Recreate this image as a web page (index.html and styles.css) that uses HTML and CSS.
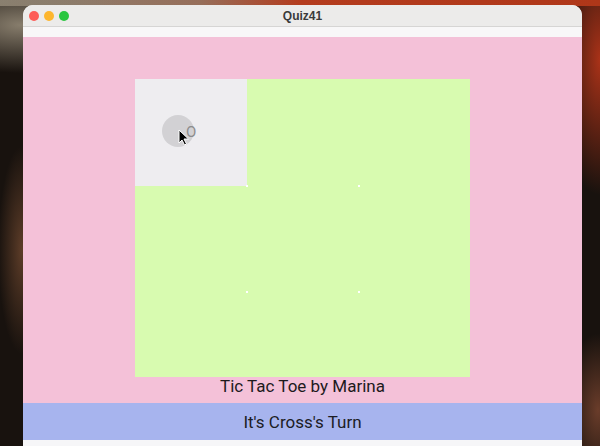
FILE: index.html
```html
<!DOCTYPE html>
<html>
<head>
<meta charset="utf-8">
<title>Quiz41</title>
<link rel="stylesheet" href="styles.css">
</head>
<body>
<div class="desktop">
  <div class="window">
    <div class="titlebar">
      <div class="lights">
        <span class="light red"></span>
        <span class="light yellow"></span>
        <span class="light green"></span>
      </div>
      <div class="title">Quiz41</div>
    </div>
    <div class="toolbar"></div>
    <div class="board-area">
      <div class="board">
        <div class="cell hovered">
          <span class="ripple"></span>
          <span class="mark">O</span>
          <svg class="cursor" width="12" height="17" viewBox="0 0 12 17"><path d="M1 1 L1 14 L4 11 L6.5 16 L8.5 15 L6 10 L10.5 10 Z" fill="#000" stroke="#fff" stroke-width="1"/></svg>
        </div>
        <div class="cell"></div>
        <div class="cell"></div>
        <div class="cell"></div>
        <div class="cell"></div>
        <div class="cell"></div>
        <div class="cell"></div>
        <div class="cell"></div>
        <div class="cell"></div>
        <span class="dot d1"></span>
        <span class="dot d2"></span>
        <span class="dot d3"></span>
        <span class="dot d4"></span>
      </div>
      <div class="caption">Tic Tac Toe by Marina</div>
    </div>
    <div class="status">It's Cross's Turn</div>
    <div class="footer"></div>
  </div>
</div>
</body>
</html>
```
FILE: styles.css
```css
html, body {
  margin: 0;
  padding: 0;
  width: 600px;
  height: 446px;
  overflow: hidden;
}
.desktop {
  width: 600px;
  height: 446px;
  padding: 5px 0 0 23px;
  box-sizing: border-box;
  background:
    radial-gradient(ellipse 30px 130px at 22px 250px, rgba(105,68,45,0.85), rgba(105,68,45,0) 80%),
    radial-gradient(ellipse 140px 60px at 20px 25px, rgba(135,125,108,1), rgba(135,125,108,0) 80%),
    linear-gradient(90deg, rgba(140,130,115,1) 0px, rgba(150,110,90,1) 200px, rgba(180,60,30,1) 300px, rgba(175,55,25,1) 600px) top / 600px 6px no-repeat,
    radial-gradient(ellipse 50px 150px at 600px 60px, rgba(170,50,24,1), rgba(170,50,24,0) 90%),
    radial-gradient(ellipse 40px 90px at 598px 410px, rgba(115,65,45,0.9), rgba(115,65,45,0) 85%),
    #18120e;
  font-family: Roboto, "Noto Sans", sans-serif;
}
.window {
  width: 559px;
  height: 441px;
  border-radius: 10px 10px 0 0;
  overflow: hidden;
  background: #f6f6f6;
  display: flex;
  flex-direction: column;
}
.titlebar {
  height: 21px;
  flex: none;
  background: #ecebea;
  border-bottom: 1px solid #d6d5d4;
  position: relative;
  display: flex;
  align-items: center;
  justify-content: center;
}
.lights {
  position: absolute;
  left: 6px;
  top: 6px;
  display: flex;
  gap: 5px;
}
.light {
  width: 10px;
  height: 10px;
  border-radius: 50%;
  display: block;
}
.red { background: #fd5c57; }
.yellow { background: #fdb62e; }
.green { background: #2ac640; }
.title {
  font-family: "Liberation Sans", "Noto Sans", sans-serif;
  font-weight: bold;
  font-size: 12px;
  color: #3a3a3a;
  margin-top: 1px;
}
.toolbar {
  height: 10px;
  flex: none;
  background: #f8f7f8;
}
.board-area {
  height: 366px;
  flex: none;
  background: #f4c1d8;
  padding-top: 42px;
  box-sizing: border-box;
  display: flex;
  flex-direction: column;
  align-items: center;
}
.board {
  width: 335px;
  height: 298px;
  flex: none;
  display: grid;
  grid-template-columns: repeat(3, 1fr);
  grid-template-rows: repeat(3, 106.5px);
  position: relative;
  overflow: hidden;
  background: #d8fbb0;
}
.cell {
  background: #d8fbb0;
  position: relative;
}
.cell.hovered {
  background: #eeedf0;
}
.ripple {
  position: absolute;
  left: 27px;
  top: 36px;
  width: 32px;
  height: 32px;
  border-radius: 50%;
  background: #d2d1d4;
}
.mark {
  position: absolute;
  left: 51px;
  top: 44px;
  font-size: 15px;
  color: #8c8c8c;
  line-height: 18px;
}
.cursor {
  position: absolute;
  left: 43px;
  top: 50px;
}
.dot {
  position: absolute;
  width: 2px;
  height: 2px;
  background: #ffffff;
}
.d1 { left: 111px; top: 106px; }
.d2 { left: 223px; top: 106px; }
.d3 { left: 111px; top: 212px; }
.d4 { left: 223px; top: 212px; }
.caption {
  flex: none;
  font-size: 17px;
  line-height: 20px;
  color: #1e1a1c;
  margin-top: -1px;
}
.status {
  height: 37px;
  flex: none;
  background: #a7b4ee;
  display: flex;
  align-items: center;
  justify-content: center;
  font-size: 17px;
  color: #1c1c24;
  padding-top: 1px;
  box-sizing: border-box;
}
.footer {
  flex: 1;
  background: #f6f6f8;
}
```
